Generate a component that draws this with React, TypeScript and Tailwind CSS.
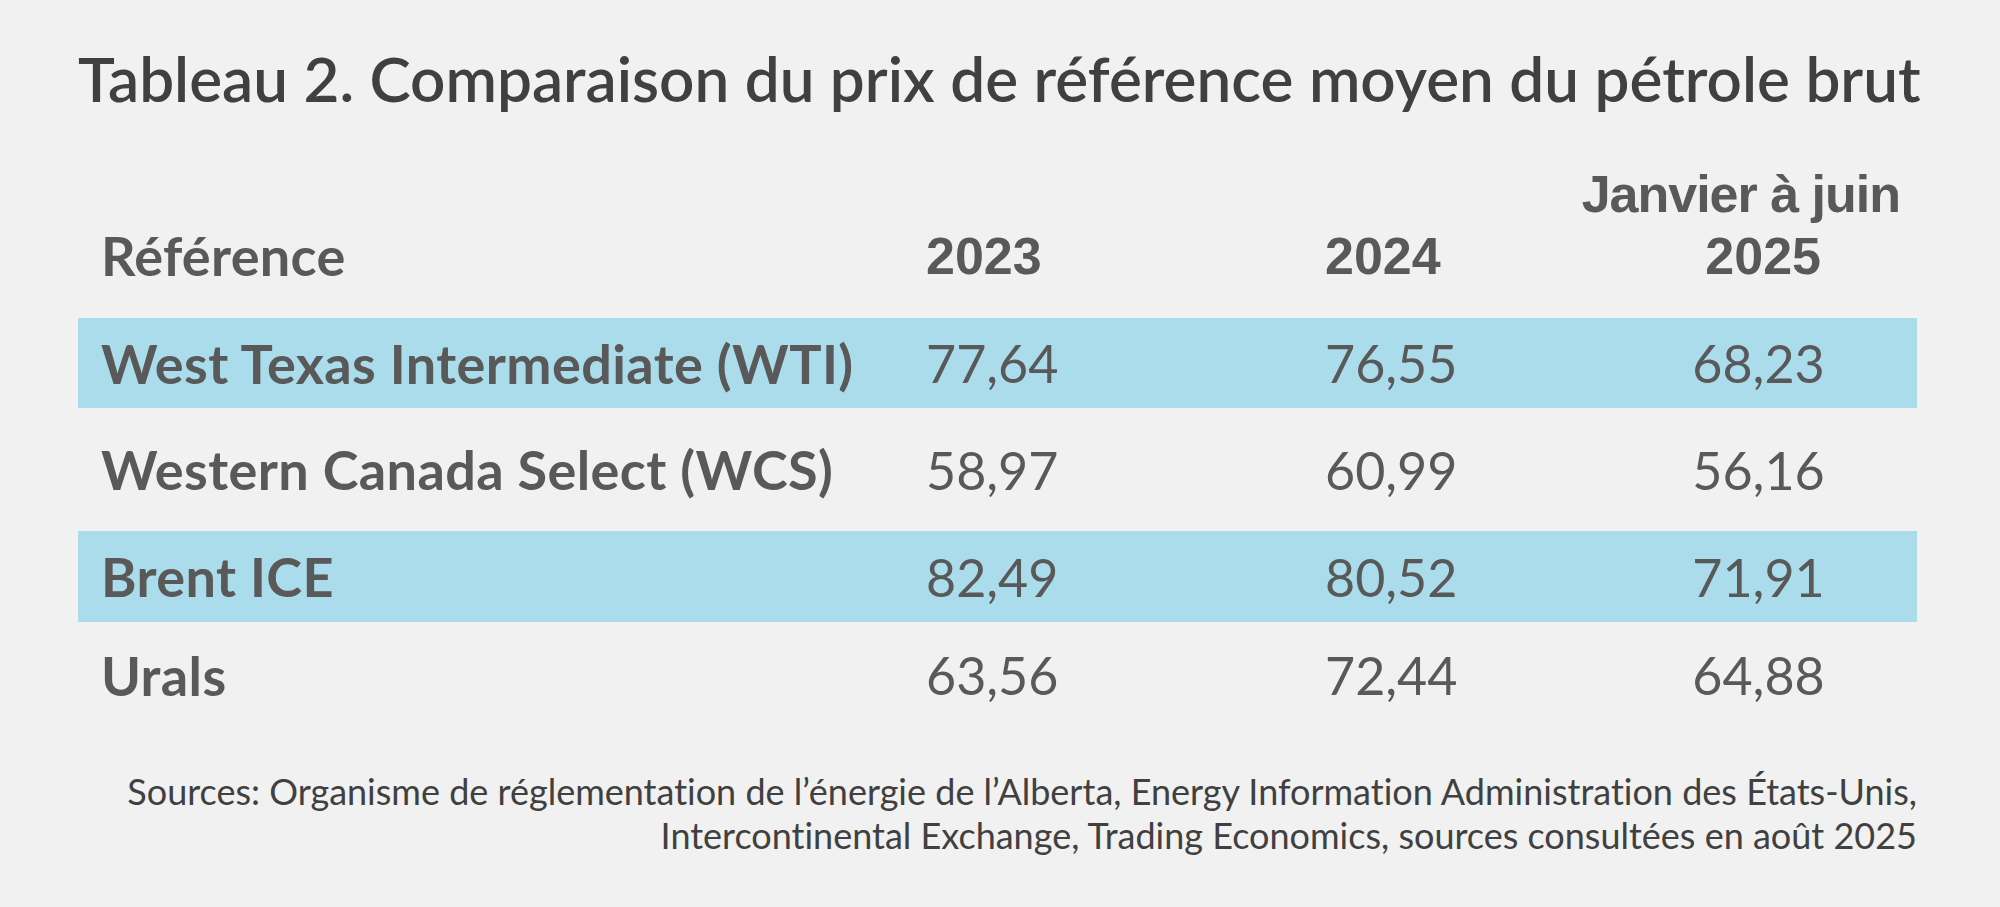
const rows = [
  { label: "West Texas Intermediate (WTI)", a: "77,64", b: "76,55", c: "68,23", band: true, h: "h-[90px]" },
  { label: "Western Canada Select (WCS)", a: "58,97", b: "60,99", c: "56,16", band: false, h: "h-[123px]" },
  { label: "Brent ICE", a: "82,49", b: "80,52", c: "71,91", band: true, h: "h-[91px]" },
  { label: "Urals", a: "63,56", b: "72,44", c: "64,88", band: false, h: "h-[106px]" },
];

export default function App() {
  return (
    <div className="w-[2000px] h-[907px] bg-[#f1f1f1] pl-[78px] pr-[83px] font-['Lato',sans-serif] [font-variant-ligatures:none] overflow-hidden">
      {/* Title */}
      <h1 className="mt-[47px] text-[62px] leading-[62px] font-semibold text-[#404040] whitespace-nowrap">
        Tableau 2. Comparaison du prix de référence moyen du pétrole brut
      </h1>

      {/* Header row */}
      <div className="grid grid-cols-[825px_399px_250px_minmax(0,1fr)] h-[209px] items-end pl-[23px] pb-[31px] text-[52px] leading-[62px] font-bold text-[#595959]">
        <div className="text-[54px] tracking-[0.3px]">Référence</div>
        <div className="font-['Liberation_Sans',Arial,sans-serif]">2023</div>
        <div className="font-['Liberation_Sans',Arial,sans-serif]">2024</div>
        <div className="flex flex-col items-end font-['Liberation_Sans',Arial,sans-serif]">
          <span className="mr-[17px] tracking-[-1px] whitespace-nowrap">Janvier à juin</span>
          <span className="mr-[96px]">2025</span>
        </div>
      </div>

      {/* Body rows */}
      {rows.map((r) => (
        <div
          key={r.label}
          className={`grid grid-cols-[825px_399px_275px_minmax(0,1fr)] items-center pl-[23px] text-[52px] text-[#595959] ${r.h} ${r.band ? "bg-[#aadcec]" : ""}`}
        >
          <div className="font-bold text-[54px] tracking-[0.4px] whitespace-nowrap">{r.label}</div>
          <div>{r.a}</div>
          <div>{r.b}</div>
          <div className="text-center">{r.c}</div>
        </div>
      ))}

      {/* Sources */}
      <p className="mt-[41px] text-right text-[36px] leading-[44px] text-[#404040]">
        Sources: Organisme de réglementation de l’énergie de l’Alberta, Energy Information Administration des États-Unis,
        <br />
        Intercontinental Exchange, Trading Economics, sources consultées en août 2025
      </p>
    </div>
  );
}
